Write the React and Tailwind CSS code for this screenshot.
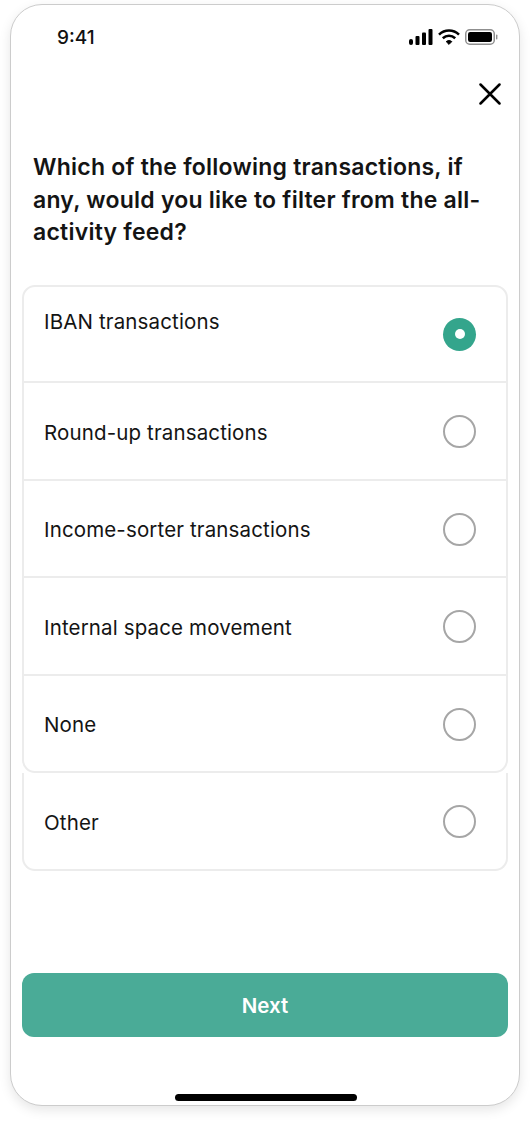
const rows = [
  { label: 'Round-up transactions', h: 'h-[98px]' },
  { label: 'Income-sorter transactions', h: 'h-[97px]' },
  { label: 'Internal space movement', h: 'h-[98px]' },
  { label: 'None', h: 'h-[97px]' },
];

function Radio({ checked }) {
  if (checked) {
    return (
      <div className="w-[33px] h-[33px] rounded-full bg-[#34a58c] flex items-center justify-center shrink-0">
        <div className="w-[10px] h-[10px] rounded-full bg-white"></div>
      </div>
    );
  }
  return <div className="w-[33px] h-[33px] rounded-full border-2 border-[#a6a6a6] bg-white shrink-0"></div>;
}

function Label({ children }) {
  return <span className="text-[20.5px] leading-[30px] tracking-[0.14px] text-[#141414]">{children}</span>;
}

export default function App() {
  return (
    <div className="w-[530px] h-[1121px] bg-white pt-[4px] pl-[10px] font-['Inter','Liberation_Sans',sans-serif]">
      <div className="w-[510px] h-[1102px] rounded-[32px] border border-[#cccccc] bg-white shadow-[0_4px_12px_rgba(0,0,0,0.1)] flex flex-col px-[11px]">
        {/* status bar */}
        <div className="h-[57px] flex items-center justify-between pl-[35px] pr-[10px] pt-[6px] shrink-0">
          <span className="mt-[4px] text-[19px] font-medium text-[#111]">9:41</span>
          <div className="flex items-center gap-[5px]">
            <svg width="24" height="16" viewBox="0 0 24 16" fill="#000">
              <rect x="0" y="10" width="4" height="6" rx="2" />
              <rect x="6.5" y="7" width="4" height="9" rx="1" />
              <rect x="13" y="3.5" width="4" height="12.5" rx="1" />
              <rect x="19.5" y="0" width="4" height="16" rx="1" />
            </svg>
            <svg width="22" height="16" viewBox="0 0 22 16" fill="none" stroke="#000" strokeWidth="2.6">
              <path d="M1 5.6C6.8 0.2 15.2 0.2 21 5.6" />
              <path d="M4.8 9.2C8.4 6 13.6 6 17.2 9.2" />
              <path d="M8.2 12.6 11 15.4 13.8 12.6C12.2 11.2 9.8 11.2 8.2 12.6Z" fill="#000" strokeWidth="1" />
            </svg>
            <svg width="33" height="16" viewBox="0 0 33 16" fill="none">
              <rect x="0.75" y="0.75" width="28.5" height="14.5" rx="4" stroke="#8f8f8f" strokeWidth="1.5" />
              <rect x="3" y="3" width="24" height="10" rx="2.2" fill="#000" />
              <rect x="31" y="5.5" width="1.4" height="5" rx="0.7" fill="#8f8f8f" />
            </svg>
          </div>
        </div>

        {/* close */}
        <div className="flex justify-end pr-[7px] pt-[21px] shrink-0">
          <svg width="22" height="22" viewBox="0 0 22 22" fill="none" stroke="#000" strokeWidth="2.5" strokeLinecap="round">
            <path d="M1.5 1.5 20.5 20.5M20.5 1.5 1.5 20.5" />
          </svg>
        </div>

        <h1 className="mt-[46px] ml-[11px] w-[460px] text-[23px] leading-[32.5px] font-semibold tracking-[0.23px] text-[#141414] shrink-0">
          Which of the following transactions, if any, would you like to filter from the all-activity feed?
        </h1>

        {/* options */}
        <div className="mt-[36px] w-[486px] shrink-0">
          <div className="border-2 border-[#ececec] rounded-[13px]">
            <div className="h-[94px] flex justify-between pl-[20px] pr-[30px]">
              <span className="pt-[20px]"><Label>IBAN transactions</Label></span>
              <div className="pt-[31px]"><Radio checked /></div>
            </div>
            {rows.map((r) => (
              <div key={r.label} className={`${r.h} flex items-center justify-between pl-[20px] pr-[30px] pt-[2px] border-t-2 border-[#ececec]`}>
                <span className="mt-[2px]"><Label>{r.label}</Label></span>
                <Radio />
              </div>
            ))}
          </div>
          <div className="h-[98px] pt-[2px] border-x-2 border-b-2 border-[#ececec] rounded-b-[13px] flex items-center justify-between pl-[20px] pr-[30px]">
            <span className="mt-[2px]"><Label>Other</Label></span>
            <Radio />
          </div>
        </div>

        <button className="mt-[102px] w-[486px] h-[64px] pt-[3px] rounded-[12px] bg-[#4aab97] text-white text-[20.5px] font-semibold shrink-0">
          Next
        </button>

        <div className="mt-[57px] ml-[153px] w-[182px] h-[7px] rounded-full bg-black shrink-0"></div>
      </div>
    </div>
  );
}
